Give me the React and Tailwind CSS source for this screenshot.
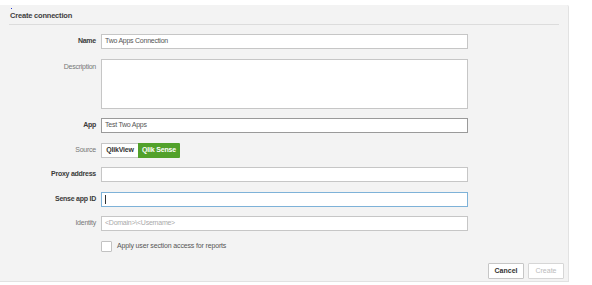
import React from 'react';

const font = { fontFamily: '"Liberation Sans", Arial, sans-serif' };

function Row({ label, bold, children, top }) {
  return (
    <div className={`flex ${top ? 'items-start' : 'items-center'}`}>
      <div
        className={`w-[96px] shrink-0 text-right text-[7px] tracking-[-0.25px] ${
          bold ? 'font-bold text-[#3a3a3a]' : 'text-[#777]'
        } ${top ? 'pt-[3px]' : ''}`}
      >
        {label}
      </div>
      <div className="ml-[5px] w-[367px]">{children}</div>
    </div>
  );
}

function Field({ value, placeholder, border = 'border-[#c6c6c6]', cursor }) {
  return (
    <div
      className={`h-[15px] bg-white border ${border} flex items-center px-[3px] text-[7px] tracking-[-0.25px] text-[#555]`}
    >
      {cursor && <span className="w-px h-[9px] bg-[#333]" />}
      {value}
      {placeholder && <span className="text-[#aaa]">{placeholder}</span>}
    </div>
  );
}

export default function App() {
  return (
    <div className="w-[592px] h-[285px] bg-white pt-[5px]" style={font}>
      <div className="relative w-[569px] h-[277px] bg-[#f3f3f3] border-r border-b border-[#e2e2e2] rounded-tr-[2px] flex flex-col">
        {/* header */}
        <div className="mx-[9px] h-[20px] border-b border-[#dcdcdc] flex items-center pl-[1px] pt-[2px]">
          <span className="text-[7.5px] font-bold tracking-[-0.2px] text-[#404040]">Create connection</span>
        </div>
        <span className="absolute left-[11px] top-[3px] w-px h-px bg-[#2b3bd0]" />

        {/* form */}
        <div className="mt-[9px] flex flex-col gap-[9.5px]">
          <Row label="Name" bold>
            <Field value="Two Apps Connection" />
          </Row>
          <Row label="Description" top>
            <div className="h-[50px] bg-white border border-[#c6c6c6]" />
          </Row>
          <Row label="App" bold>
            <Field value="Test Two Apps" border="border-[#9a9a9a]" />
          </Row>
          <Row label="Source">
            <div className="flex h-[15px] text-[7px] tracking-[-0.2px] font-bold">
              <div className="w-[37px] bg-white border border-[#c6c6c6] border-r-0 flex items-center justify-center text-[#333] rounded-l-[1px]">
                QlikView
              </div>
              <div className="w-[42px] bg-[#52a12b] flex items-center justify-center text-white rounded-r-[1px]">
                Qlik Sense
              </div>
            </div>
          </Row>
          <Row label="Proxy address" bold>
            <Field />
          </Row>
          <Row label="Sense app ID" bold>
            <Field border="border-[#7eb2d8]" cursor />
          </Row>
          <Row label="Identity">
            <Field placeholder="<Domain>\<Username>" />
          </Row>
          <Row label="">
            <div className="flex items-center h-[12px]">
              <div className="w-[11px] h-[11px] bg-white border border-[#c2c2c2] rounded-[1px]" />
              <span className="ml-[5px] text-[7px] tracking-[-0.15px] text-[#555]">
                Apply user section access for reports
              </span>
            </div>
          </Row>
        </div>

        {/* footer */}
        <div className="mt-auto mb-[2px] mr-[4px] flex justify-end gap-[4px]">
          <button className="w-[36px] h-[16px] bg-white border border-[#c6c6c6] text-[7px] font-bold text-[#333] rounded-[1px]">
            Cancel
          </button>
          <button className="w-[36px] h-[16px] bg-white border border-[#d6d6d6] text-[7px] text-[#bbb] rounded-[1px]">
            Create
          </button>
        </div>
      </div>
    </div>
  );
}
